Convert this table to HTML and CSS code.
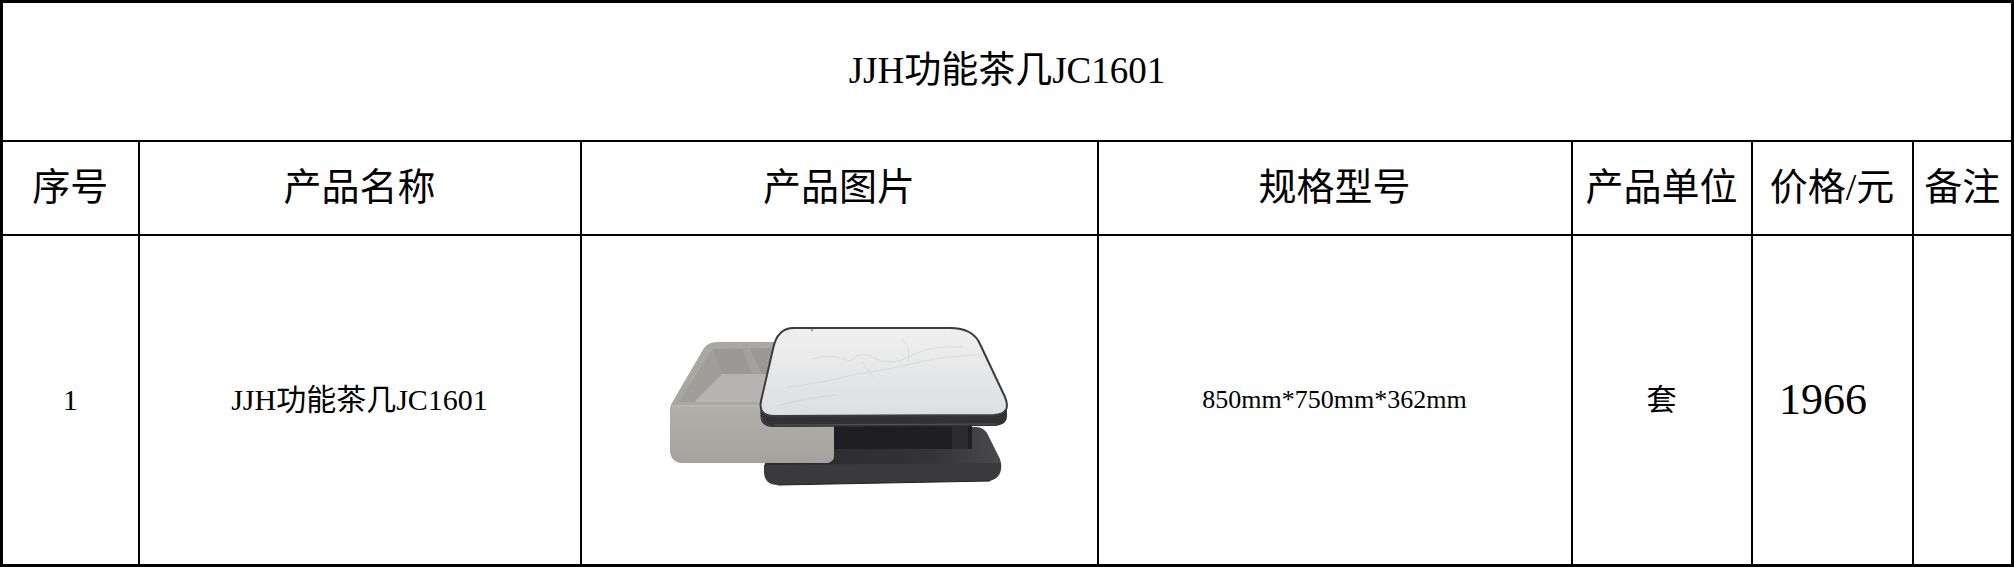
FILE: index.html
```html
<!DOCTYPE html>
<html lang="zh-CN">
<head>
<meta charset="utf-8">
<title>JJH功能茶几JC1601</title>
<link rel="stylesheet" href="styles.css">
</head>
<body>
<table class="sheet">
  <colgroup>
    <col class="c-no">
    <col class="c-name">
    <col class="c-pic">
    <col class="c-spec">
    <col class="c-unit">
    <col class="c-price">
    <col class="c-note">
  </colgroup>
  <tr class="row-title">
    <td colspan="7" class="title">JJH功能茶几JC1601</td>
  </tr>
  <tr class="row-head">
    <td>序号</td>
    <td>产品名称</td>
    <td>产品图片</td>
    <td>规格型号</td>
    <td>产品单位</td>
    <td>价格/元</td>
    <td>备注</td>
  </tr>
  <tr class="row-item">
    <td>1</td>
    <td>JJH功能茶几JC1601</td>
    <td class="pic">
      <svg class="table-pic" width="355" height="182" viewBox="0 0 355 182" xmlns="http://www.w3.org/2000/svg">
        <defs>
          <linearGradient id="marble" x1="0" y1="0" x2="0" y2="1">
            <stop offset="0" stop-color="#f0f0f0"/>
            <stop offset="1" stop-color="#dddee0"/>
          </linearGradient>
          <linearGradient id="trayFront" x1="0" y1="0" x2="0" y2="1">
            <stop offset="0" stop-color="#b0afaa"/>
            <stop offset="1" stop-color="#a3a29d"/>
          </linearGradient>
          <linearGradient id="baseTop" x1="0" y1="0" x2="1" y2="0">
            <stop offset="0" stop-color="#2a2a2c"/>
            <stop offset="0.7" stop-color="#333335"/>
            <stop offset="1" stop-color="#4a4a4c"/>
          </linearGradient>
          <path id="top" d="M132 19 L288 19 Q311 19 318 35 L343 88 Q350 105 332 106 L112 107 Q96 107 99 92 L111 40 Q115 19 132 19 Z"/>
        </defs>
        <!-- base plate -->
        <path d="M112 122 L314 118 Q322 118 326 126 L338 150 Q342 163 330 167 L118 170 Q103 170 102 158 Z" fill="url(#baseTop)"/>
        <path d="M102 156 L339 154 Q341 168 328 172 L116 176 Q103 176 102 164 Z" fill="#3a3a3c"/>
        <path d="M116 176 L328 172" stroke="#202022" stroke-width="1.2" fill="none"/>
        <!-- column under top -->
        <rect x="165" y="110" width="145" height="30" fill="#1f1f21"/>
        <rect x="290" y="112" width="16" height="28" fill="#2c2c2e"/>
        <!-- tray -->
        <path d="M42 39 Q46 33 56 33 L172 33 L172 146 Q172 154 163 154 L22 154 Q8 154 8 140 L8 101 Q8 96 11 92 Z" fill="#a8a7a2"/>
        <path d="M8 98 L172 98 L172 146 Q172 154 163 154 L22 154 Q8 154 8 140 Z" fill="url(#trayFront)"/>
        <path d="M10 97 L172 97" stroke="#bdbcb7" stroke-width="1.5"/>
        <path d="M51 40 L172 38 L172 93 L17 93 Z" fill="#9b9995"/>
        <path d="M60 65 L172 65 L172 93 L32 93 Z" fill="#b6b3b2"/>
        <path d="M51 40 L60 65 L32 93 L17 93 Z" fill="#a09e9a"/>
        <path d="M80 40 L90 65 L100 65 L88 40 Z" fill="#a6a4a1" opacity="0.7"/>
        <!-- marble top rim -->
        <g fill="#323234">
          <use href="#top" transform="translate(0,2)"/>
          <use href="#top" transform="translate(0,5)"/>
          <use href="#top" transform="translate(0,8)"/>
          <use href="#top" transform="translate(0,11)"/>
        </g>
        <path d="M108 116 Q100 114 99 106" stroke="#4a4a4c" stroke-width="1" fill="none"/>
        <path d="M112 116 L334 115" stroke="#56565a" stroke-width="1" fill="none"/>
        <!-- marble surface -->
        <use href="#top" fill="url(#marble)" stroke="#3c3c3e" stroke-width="2"/>
        <g fill="none" stroke="#aeb2b7" stroke-width="0.6" opacity="0.45">
          <path d="M150 50 Q170 44 188 52 Q200 40 214 50 Q232 58 250 46 Q270 36 300 38"/>
          <path d="M125 78 Q160 74 190 66 Q230 60 262 52 Q290 46 322 46"/>
          <path d="M200 52 Q205 62 212 68"/>
          <path d="M240 30 Q250 40 246 52"/>
          <path d="M118 96 Q150 88 175 86"/>
        </g>
        <circle cx="150" cy="21" r="1.2" fill="#d98b7c"/>
      </svg>
    </td>
    <td class="spec">850mm*750mm*362mm</td>
    <td>套</td>
    <td class="price">1966</td>
    <td></td>
  </tr>
</table>
</body>
</html>
```

FILE: styles.css
```css
html, body {
  margin: 0;
  padding: 0;
  background: #ffffff;
}

.sheet {
  border-collapse: collapse;
  table-layout: fixed;
  width: 2013px;
  border: 3px solid #000;
  font-family: "Liberation Serif", "Noto Sans CJK SC", serif;
  color: #000;
}

.c-no { width: 137px; }
.c-name { width: 442px; }
.c-pic { width: 517px; }
.c-spec { width: 474px; }
.c-unit { width: 180px; }
.c-price { width: 161px; }
.c-note { width: 100px; }

.sheet td {
  border: 2px solid #000;
  padding: 0;
  text-align: center;
  vertical-align: middle;
  line-height: 1.2;
  white-space: nowrap;
  overflow: hidden;
}

.row-title td {
  height: 137px;
}

.title {
  font-size: 37px;
  padding-top: 4px;
}

.row-head td {
  height: 92px;
  font-size: 38px;
}

.row-item td {
  height: 328px;
  font-size: 30px;
}

.row-item .spec {
  font-size: 26px;
}

.row-item .price {
  font-size: 44px;
  padding-right: 18px;
}

.table-pic {
  display: block;
  margin: 0 auto;
}
```
